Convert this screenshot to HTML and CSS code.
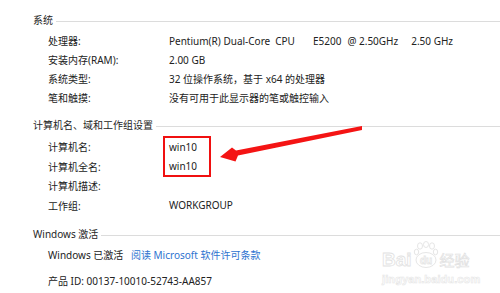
FILE: index.html
```html
<!DOCTYPE html>
<html lang="zh-CN">
<head>
<meta charset="utf-8">
<link rel="stylesheet" href="styles.css">
</head>
<body>
<div class="page">
  <section class="group g1">
    <div class="group-title"><span>系统</span><i class="rule"></i></div>
    <div class="rows">
      <div class="row"><span class="label">处理器:</span><span class="value cpu"><span>Pentium(R) Dual-Core</span><span class="c1">CPU</span><span class="c2">E5200</span><span class="c3">@ 2.50GHz</span><span class="c4">2.50 GHz</span></span></div>
      <div class="row"><span class="label">安装内存(RAM):</span><span class="value">2.00 GB</span></div>
      <div class="row"><span class="label">系统类型:</span><span class="value">32 位操作系统，基于 x64 的处理器</span></div>
      <div class="row"><span class="label">笔和触摸:</span><span class="value">没有可用于此显示器的笔或触控输入</span></div>
    </div>
  </section>
  <section class="group g2">
    <div class="group-title"><span>计算机名、域和工作组设置</span><i class="rule"></i></div>
    <div class="rows rows2">
      <div class="row"><span class="label">计算机名:</span><span class="value">win10</span></div>
      <div class="row"><span class="label">计算机全名:</span><span class="value">win10</span></div>
      <div class="row"><span class="label">计算机描述:</span><span class="value"></span></div>
      <div class="row"><span class="label">工作组:</span><span class="value">WORKGROUP</span></div>
    </div>
  </section>
  <section class="group g3">
    <div class="group-title"><span>Windows 激活</span><i class="rule"></i></div>
    <div class="act">
      <div class="act-row">Windows 已激活 <a class="link">阅读 Microsoft 软件许可条款</a></div>
      <div class="act-row pid">产品 ID: 00137-10010-52743-AA857</div>
    </div>
  </section>

  <div class="mark-box"></div>
  <svg class="arrow" width="500" height="293" viewBox="0 0 500 293">
    <polygon points="220,157 232,147.5 236,150.5 362,126 362,130 238,155.5 235.5,161.5" fill="#f41414"/>
  </svg>

  <div class="watermark">
    <div class="wm-top">
      <span class="wm-bai">Bai</span>
      <svg class="wm-paw" width="26" height="28" viewBox="0 0 26 28">
        <g fill="none" stroke="#e6e6e6" stroke-width="1">
          <ellipse cx="7" cy="5" rx="2.5" ry="3.2"/>
          <ellipse cx="13" cy="3.5" rx="2.5" ry="3"/>
          <ellipse cx="19" cy="5" rx="2.5" ry="3.2"/>
          <ellipse cx="3.5" cy="11" rx="2.2" ry="2.8"/>
          <ellipse cx="22.5" cy="11" rx="2.2" ry="2.8"/>
          <ellipse cx="13" cy="19" rx="10" ry="7.5"/>
        </g>
        <text x="13" y="22.5" text-anchor="middle" font-family="Liberation Sans, sans-serif" font-size="10" font-weight="bold" fill="none" stroke="#e6e6e6" stroke-width="0.8">du</text>
      </svg>
      <span class="wm-jy">经验</span>
    </div>
    <div class="wm-url">jingyan.baidu.com</div>
  </div>
</div>
</body>
</html>
```
FILE: styles.css
```css
html, body {
  margin: 0;
  padding: 0;
  background: #ffffff;
}
body {
  width: 500px;
  height: 293px;
  overflow: hidden;
  font-family: "Noto Sans", "Noto Sans CJK SC", sans-serif;
  font-size: 10px;
  color: #222222;
}
.page {
  position: relative;
  width: 500px;
  height: 293px;
  padding-top: 10px;
  box-sizing: border-box;
}
.group-title {
  display: flex;
  align-items: center;
  height: 19px;
  padding-left: 33px;
  color: #262626;
}
.rule {
  flex: 1;
  height: 0;
  border-top: 1px solid #dcdcdc;
  margin-left: 3px;
  margin-top: 3px;
}
.rows {
  margin-top: 2px;
  padding-left: 48px;
}
.row {
  display: grid;
  grid-template-columns: 121px 1fr;
  height: 19px;
  align-items: center;
}
.rows2 .row {
  height: 19.5px;
}
.cpu {
  display: flex;
  white-space: pre;
}
.c1 { margin-left: 5px; }
.c2 { margin-left: 18px; }
.c3 { margin-left: 6px; }
.c4 { margin-left: 13px; }
.g2 {
  margin-top: 8px;
}
.rows2 {
  margin-top: 3px;
}
.g3 {
  margin-top: 9px;
}
.act {
  padding-left: 48px;
  margin-top: 2px;
}
.act-row {
  height: 19px;
  display: flex;
  align-items: center;
  white-space: pre;
}
.act-row.pid {
  margin-top: 7px;
}
.link {
  color: #2e74d0;
  margin-left: 5px;
}
.mark-box {
  position: absolute;
  left: 163px;
  top: 136px;
  width: 44px;
  height: 37px;
  border: 2px solid #f01010;
}
.arrow {
  position: absolute;
  left: 0;
  top: 0;
}
.watermark {
  position: absolute;
  left: 382px;
  top: 239px;
  width: 94px;
}
.wm-top {
  display: flex;
  align-items: flex-end;
  height: 30px;
}
.wm-bai {
  font-family: "Liberation Sans", sans-serif;
  font-size: 19px;
  font-weight: bold;
  line-height: 18px;
  color: #ffffff;
  -webkit-text-stroke: 0.8px #e2e2e2;
}
.wm-paw {
  margin: 0 1px;
}
.wm-jy {
  font-family: "Noto Sans CJK SC", sans-serif;
  font-size: 15px;
  line-height: 18px;
  color: #ffffff;
  -webkit-text-stroke: 0.7px #e2e2e2;
}
.wm-url {
  font-family: "Liberation Sans", sans-serif;
  font-size: 11px;
  font-weight: bold;
  color: #ffffff;
  -webkit-text-stroke: 0.6px #e6e6e6;
  margin-top: 4px;
  letter-spacing: 0.1px;
}
```
